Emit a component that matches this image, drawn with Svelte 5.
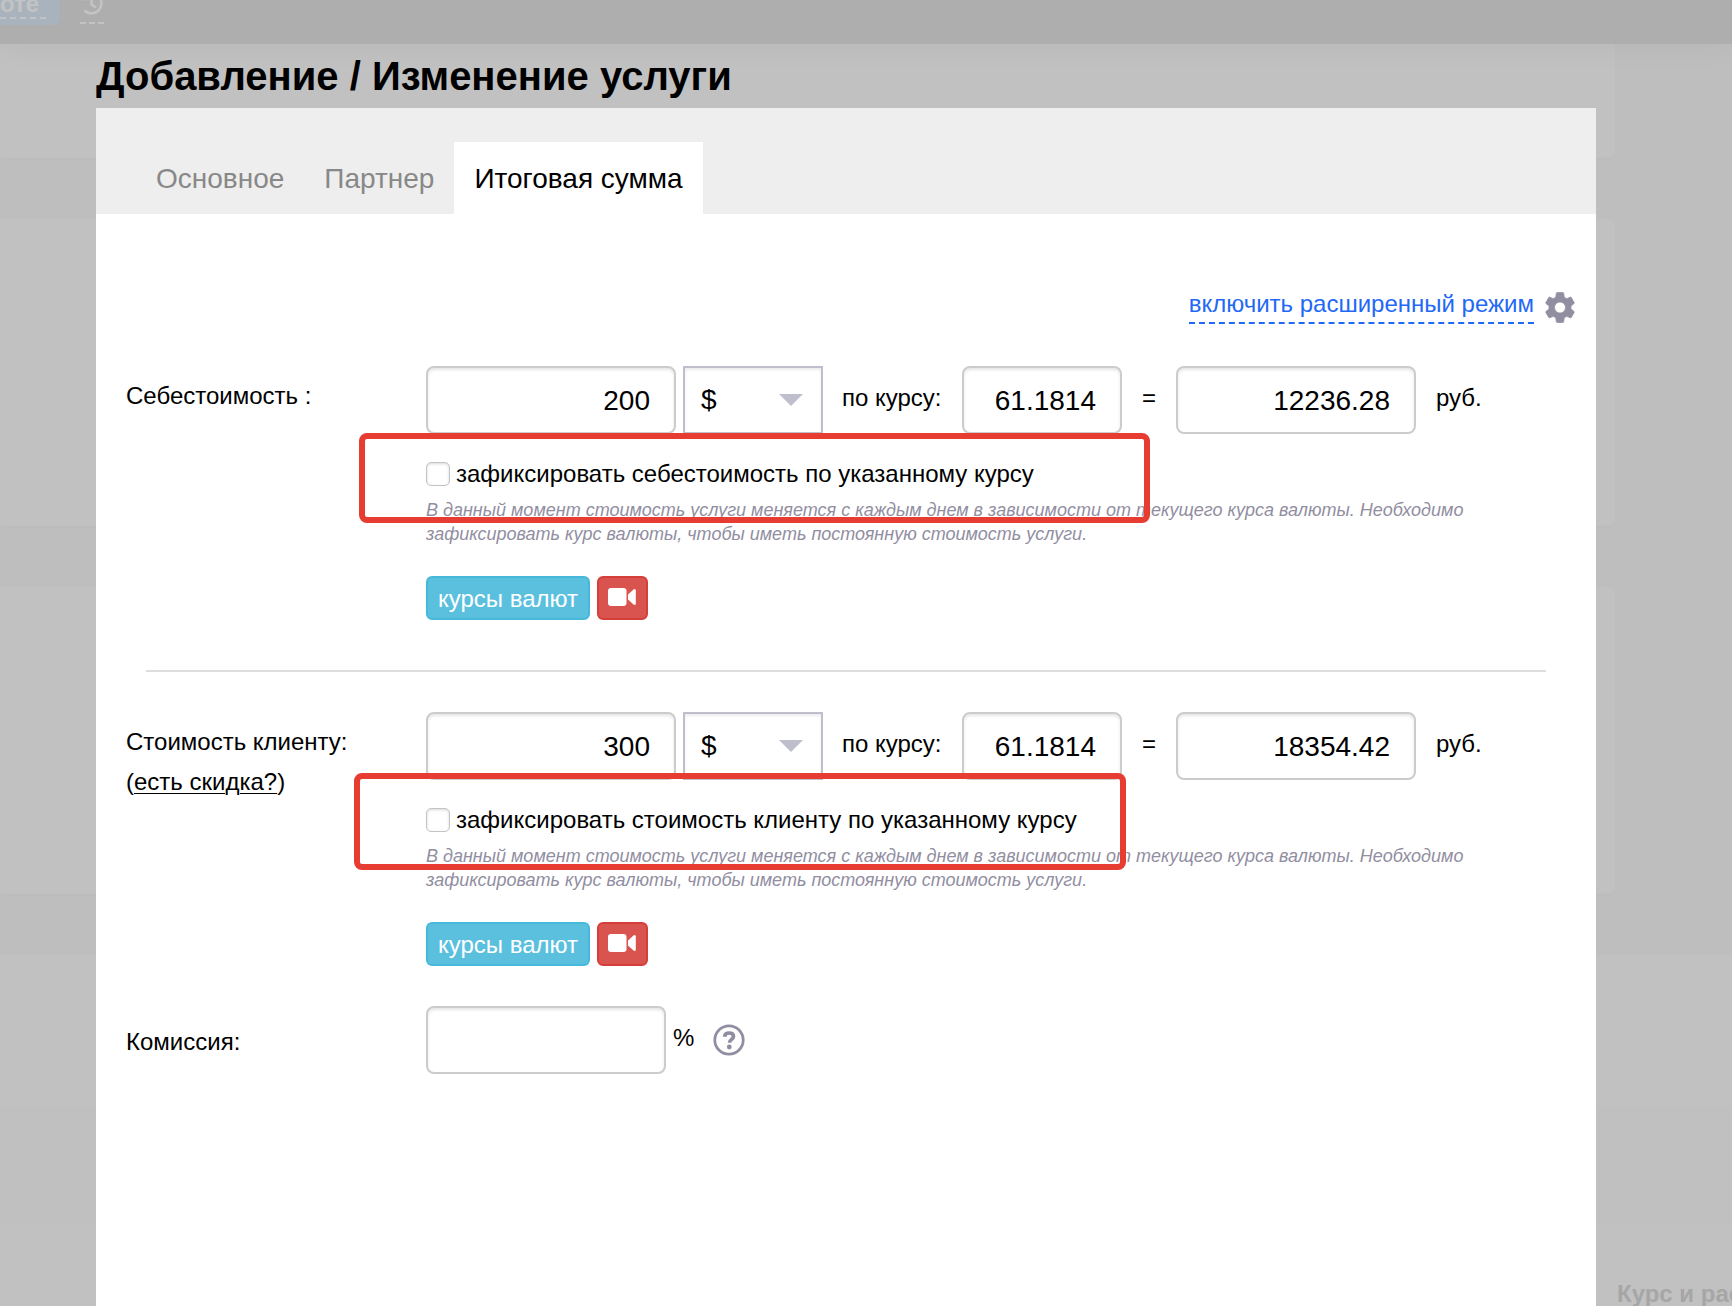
<script lang="ts">
	interface Price {
		id: string;
		label: string;
		discountLink?: string;
		amount: string;
		rate: string;
		total: string;
		fixLabel: string;
	}

	const tabs = ["Основное", "Партнер", "Итоговая сумма"];
	let activeTab = $state(2);
	let commission = $state("");

	let prices: Price[] = $state([
		{
			id: "cost",
			label: "Себестоимость :",
			amount: "200",
			rate: "61.1814",
			total: "12236.28",
			fixLabel: "зафиксировать себестоимость по указанному курсу"
		},
		{
			id: "client",
			label: "Стоимость клиенту:",
			discountLink: "есть скидка?",
			amount: "300",
			rate: "61.1814",
			total: "18354.42",
			fixLabel: "зафиксировать стоимость клиенту по указанному курсу"
		}
	]);
</script>

<div class="screen">
	<div class="page">
		<header class="topbar">
			<span class="top-button"><span>оте</span></span>
			<span class="history">
				<svg width="24" height="24" viewBox="0 0 24 24" fill="none" stroke="currentColor" stroke-width="2.6">
					<path d="M4.5 19.5A10 10 0 1 0 3 7" />
					<path d="M3 2v6h6M11.500 6.500V13.500L16 16.500" />
				</svg>
			</span>
		</header>
		<div class="card first"></div>
		<div class="card"></div>
		<div class="card"></div>
		<div class="bottom">
			<div class="band"></div>
			<div class="bottom-title">Курс и рас</div>
		</div>
	</div>

	<div class="modal">
		<h1>Добавление / Изменение услуги</h1>
		<nav class="tabs">
			{#each tabs as tab, i}
				<button type="button" class="tab" class:active={i === activeTab} onclick={() => (activeTab = i)}>{tab}</button>
			{/each}
		</nav>

		<div class="content">
			<div class="mode">
				<a href="#mode">включить расширенный режим</a>
				<svg class="gear" width="30" height="31" viewBox="2.200 2 19.600 20" preserveAspectRatio="none">
					<path fill="currentColor" stroke="currentColor" stroke-width=".5" stroke-linejoin="round" d="M19.140 12.940c.040-.300.060-.610.060-.940s-.020-.640-.070-.940l2.030-1.580c.180-.140.230-.410.120-.610l-1.920-3.320c-.120-.220-.370-.290-.590-.220l-2.390.960c-.500-.380-1.030-.700-1.620-.940L14.400 2.810c-.040-.240-.240-.410-.480-.410h-3.840c-.240 0-.430.170-.470.410l-.360 2.540c-.590.240-1.130.570-1.620.940l-2.390-.960c-.220-.080-.470 0-.590.220L2.740 8.870c-.120.210-.080.470.120.610l2.030 1.580c-.050.300-.090.630-.090.940s.020.640.070.940l-2.030 1.580c-.180.140-.230.410-.120.610l1.920 3.320c.120.220.370.290.590.220l2.390-.960c.500.380 1.030.700 1.620.940l.360 2.540c.050.240.240.410.480.410h3.840c.240 0 .440-.170.470-.410l.360-2.540c.590-.240 1.130-.560 1.620-.940l2.390.960c.220.080.470 0 .590-.220l1.920-3.320c.120-.220.070-.470-.120-.610l-2.010-1.580zM12 15.600a3.600 3.600 0 1 1 0-7.200 3.600 3.600 0 0 1 0 7.200z" />
				</svg>
			</div>

			{#each prices as price, i}
				{#if i > 0}
					<hr />
				{/if}
				<section class="row">
					<div class="label">
						{price.label}
						{#if price.discountLink}
							<br />(<a href="#discount">{price.discountLink}</a>)
						{/if}
					</div>
					<div class="fields">
						<div class="line">
							<input class="amount" type="text" bind:value={price.amount} />
							<div class="select"><span>$</span><i></i></div>
							<span class="text by-rate">по курсу:</span>
							<input class="rate" type="text" bind:value={price.rate} />
							<span class="text equals">=</span>
							<input class="total" type="text" bind:value={price.total} />
							<span class="text rub">руб.</span>
						</div>
						<label class="fix">
							<input type="checkbox" />
							{price.fixLabel}
						</label>
						<p class="hint">
							В данный момент стоимость услуги меняется с каждым днем в зависимости от текущего курса валюты. Необходимо<br />
							зафиксировать курс валюты, чтобы иметь постоянную стоимость услуги.
						</p>
						<div class="buttons">
							<button type="button" class="btn info">курсы валют</button>
							<button type="button" class="btn danger" aria-label="видео">
								<svg width="28" height="18" viewBox="0 0 28 18" fill="#fff">
									<rect width="18.500" height="18" rx="3" />
									<path d="M20 6.500 25.500 1.400Q27.800.300 27.800 2.600V15.400Q27.800 17.700 25.500 16.600L20 11.500z" />
								</svg>
							</button>
						</div>
					</div>
					<div class="mark {price.id}"></div>
				</section>
			{/each}

			<section class="row commission">
				<div class="label">Комиссия:</div>
				<div class="line">
					<input class="percent" type="text" bind:value={commission} />
					<span class="text percent-sign">%</span>
					<svg class="help" width="32" height="32" viewBox="0 0 32 32" fill="none" stroke="currentColor">
						<circle cx="16" cy="16" r="14.200" stroke-width="2.800" />
						<path d="M11.500 12.700C11.800 10.200 13.600 9 16.100 9c2.600 0 4.400 1.300 4.400 3.500 0 2.900-4 2.900-4 6.200" stroke-width="3.700" />
						<circle cx="16.300" cy="23" r="2.400" fill="currentColor" stroke="none" />
					</svg>
				</div>
			</section>
		</div>
	</div>
</div>

<style>
	:global(body) {
		margin: 0;
		overflow: hidden;
	}

	.screen {
		position: relative;
		width: 1732px;
		height: 1306px;
		overflow: hidden;
		font-family: "Liberation Sans", Arial, sans-serif;
		font-size: 24px;
		line-height: 28px;
		color: #000;
	}

	/* dimmed page under the dialog */
	.page {
		display: flex;
		flex-direction: column;
		height: 100%;
		background: #bebebe;
	}

	.topbar {
		display: flex;
		align-items: flex-start;
		flex: none;
		height: 44px;
		background: #aeaeae;
		color: #c3c3c3;
		box-shadow: 0 2px 30px rgba(0, 0, 0, 0.05);
		z-index: 1;
	}

	.top-button {
		box-sizing: border-box;
		width: 60px;
		height: 25px;
		border-radius: 0 0 7px 0;
		background: #a9b3be;
		font-weight: bold;
		line-height: 28px;
	}

	.top-button span {
		display: block;
		width: 46px;
		height: 19px;
		margin-top: -10px;
		padding-bottom: 8px;
		border-bottom: 2px dashed #c3c3c3;
	}

	.history {
		width: 24px;
		height: 24px;
		margin-left: 20px;
		border-bottom: 2px dashed #c3c3c3;
		margin-top: -2px;
	}

	.history svg {
		display: block;
		margin-top: -7px;
	}

	.card {
		flex: none;
		width: 1615px;
		height: 308px;
		margin-bottom: 60px;
		border-radius: 0 8px 8px 0;
		background: #c1c1c1;
		box-shadow: 0 1px 2px rgba(0, 0, 0, 0.02);
	}

	.card.first {
		height: 114px;
		border-top-right-radius: 0;
	}

	.bottom {
		flex: 1;
		padding-top: 152px;
		background: #c1c1c1;
	}

	.band {
		height: 117px;
		background: #c0c0c0;
	}

	.bottom-title {
		margin: 57px 0 0 1617px;
		color: #a6a6a6;
		font-weight: bold;
		white-space: nowrap;
	}

	.modal {
		position: absolute;
		top: 0;
		left: 96px;
		display: flex;
		flex-direction: column;
		width: 1500px;
		height: 1306px;
	}

	h1 {
		box-sizing: border-box;
		height: 108px;
		margin: 0;
		padding-top: 53px;
		font-size: 40px;
		line-height: 46px;
		white-space: nowrap;
	}

	.tabs {
		display: flex;
		box-sizing: border-box;
		height: 106px;
		padding: 34px 40px 0;
		background: #eee;
	}

	.tab {
		padding: 2px 20px 0;
		border: none;
		background: transparent;
		color: #888;
		font: 28px "Liberation Sans", Arial, sans-serif;
		cursor: pointer;
	}

	.tab.active {
		background: #fff;
		color: #000;
	}

	.content {
		flex: 1;
		padding: 76px 20px 0 30px;
		background: #fff;
	}

	.mode {
		display: flex;
		justify-content: flex-end;
		gap: 11px;
		height: 34px;
		margin: 0 1px 42px 0;
	}

	.mode a {
		padding-bottom: 4px;
		border-bottom: 2px dashed #1f69f6;
		color: #1f69f6;
		text-decoration: none;
	}

	.gear {
		margin-top: 2px;
		color: #918ea1;
	}

	.row {
		position: relative;
		display: flex;
	}

	.label {
		width: 300px;
		padding-top: 10px;
		line-height: 40px;
	}

	.label a {
		color: inherit;
		text-decoration: underline;
		text-decoration-thickness: 1px;
		text-underline-offset: 3px;
	}

	.line {
		display: flex;
		align-items: center;
		height: 68px;
	}

	input[type="text"] {
		box-sizing: border-box;
		height: 68px;
		padding: 1px 24px 0;
		border: 2px solid #ccc;
		border-radius: 8px;
		background: #fff;
		box-shadow: inset 0 2px 3px rgba(0, 0, 0, 0.1);
		color: #000;
		font: 28px "Liberation Sans", Arial, sans-serif;
		text-align: right;
		outline: none;
	}

	input.amount {
		width: 250px;
	}

	input.rate {
		width: 160px;
	}

	input.total,
	input.percent {
		width: 240px;
	}

	.select {
		display: flex;
		align-items: center;
		justify-content: space-between;
		box-sizing: border-box;
		width: 140px;
		height: 68px;
		margin-left: 7px;
		padding: 0 18px 0 16px;
		border: 2px solid #bfbecd;
		box-shadow: inset 0 2px 3px rgba(0, 0, 0, 0.08);
		font-size: 28px;
	}

	.select i {
		border: 12px solid transparent;
		border-top-color: #bfbecd;
		border-bottom: none;
	}

	.text {
		padding-bottom: 4px;
		white-space: nowrap;
	}

	.by-rate {
		width: 120px;
		margin-left: 19px;
	}

	.equals {
		width: 34px;
		margin-left: 20px;
	}

	.rub {
		margin-left: 20px;
	}

	.percent-sign {
		width: 40px;
		margin-left: 7px;
	}

	.fix {
		display: flex;
		align-items: center;
		gap: 6px;
		height: 28px;
		margin-top: 26px;
	}

	.fix input {
		appearance: none;
		box-sizing: border-box;
		width: 24px;
		height: 24px;
		margin: 0;
		border: 1px solid #c4c4c4;
		border-radius: 5px;
		background: #fff;
		box-shadow: inset 0 1px 3px rgba(0, 0, 0, 0.16);
	}

	.hint {
		margin: 10px 0 30px;
		color: #918ea1;
		font-size: 18px;
		font-style: italic;
		line-height: 24px;
		white-space: nowrap;
	}

	.buttons {
		display: flex;
		gap: 7px;
	}

	.btn {
		display: flex;
		align-items: center;
		justify-content: center;
		box-sizing: border-box;
		height: 44px;
		border: 2px solid;
		border-radius: 6px;
		color: #fff;
		font: 24px "Liberation Sans", Arial, sans-serif;
		white-space: nowrap;
		cursor: pointer;
	}

	.info {
		width: 164px;
		padding: 1px 0 0;
		border-color: #46b8da;
		background: #5bc0de;
	}

	.danger {
		width: 51px;
		padding: 0 1px 2px 0;
		border-color: #d43f3a;
		background: #d9534f;
	}

	hr {
		height: 2px;
		margin: 50px 30px 40px 20px;
		border: none;
		background: #ddd;
	}

	.mark {
		position: absolute;
		box-sizing: border-box;
		border: 6px solid #e63c32;
		border-radius: 8px;
		pointer-events: none;
	}

	.mark.cost {
		top: 67px;
		left: 233px;
		width: 791px;
		height: 90px;
	}

	.mark.client {
		top: 61px;
		left: 228px;
		width: 772px;
		height: 97px;
	}

	.commission {
		margin-top: 40px;
	}

	.commission .label {
		padding-top: 16px;
	}

	.help {
		color: #918ea1;
	}
</style>
